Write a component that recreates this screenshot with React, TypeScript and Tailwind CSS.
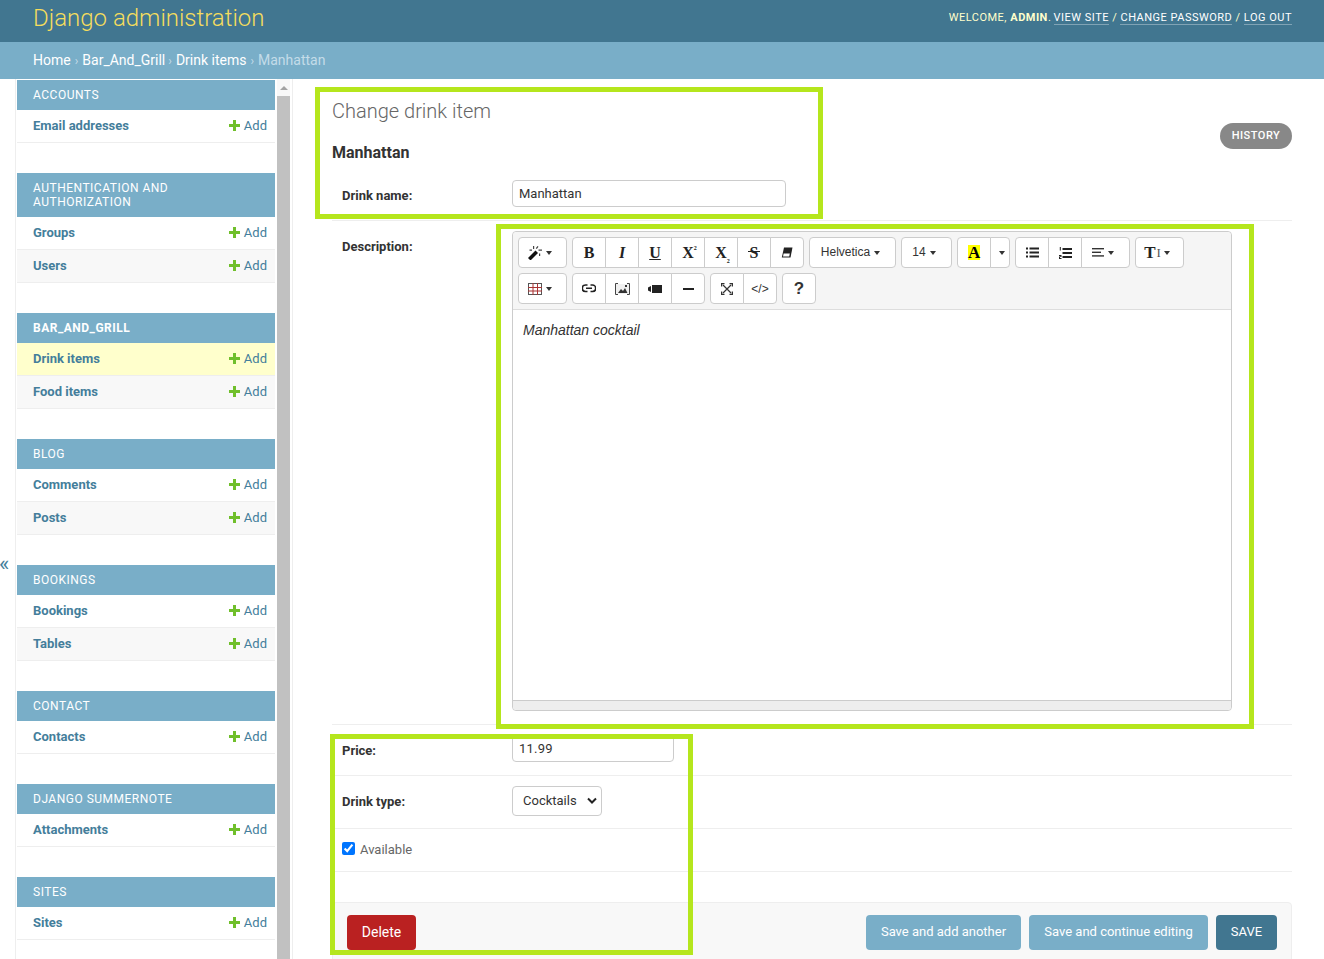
import React from "react";

const sections: { title: string; rows: { name: string; current?: boolean }[]; tall?: boolean }[] = [
  { title: "Accounts", rows: [{ name: "Email addresses" }] },
  { title: "Authentication and Authorization", tall: true, rows: [{ name: "Groups" }, { name: "Users" }] },
  { title: "Bar_And_Grill", rows: [{ name: "Drink items", current: true }, { name: "Food items" }] },
  { title: "Blog", rows: [{ name: "Comments" }, { name: "Posts" }] },
  { title: "Bookings", rows: [{ name: "Bookings" }, { name: "Tables" }] },
  { title: "Contact", rows: [{ name: "Contacts" }] },
  { title: "Django Summernote", rows: [{ name: "Attachments" }] },
  { title: "Sites", rows: [{ name: "Sites" }] },
];

function Caret() {
  return <span className="inline-block w-0 h-0 align-middle border-x-[3px] border-x-transparent border-t-[4px] border-t-[#333] ml-[4px]" />;
}

function Plus() {
  return (
    <svg width="11" height="11" viewBox="0 0 11 11" className="mr-[4px] -mt-px">
      <path d="M4 0h3v4h4v3H7v4H4V7H0V4h4z" fill="#70bf2b" />
    </svg>
  );
}

function TB({ w = 34, children, first, last }: { w?: number; children: React.ReactNode; first?: boolean; last?: boolean }) {
  return (
    <div
      style={{ width: w }}
      className={`h-[31px] bg-white border border-[#ccc] flex items-center justify-center text-[#333] -ml-px first:ml-0 ${first ? "rounded-l-[4px]" : ""} ${last ? "rounded-r-[4px]" : ""}`}
    >
      {children}
    </div>
  );
}

function Group({ items }: { items: { w?: number; c: React.ReactNode }[] }) {
  return (
    <div className="flex">
      {items.map((it, i) => (
        <TB key={i} w={it.w} first={i === 0} last={i === items.length - 1}>
          {it.c}
        </TB>
      ))}
    </div>
  );
}

const serif = "font-['Liberation_Serif',serif] font-bold text-[#222]";

function Wand() {
  return (
    <svg width="14" height="14" viewBox="0 0 14 14" fill="#111">
      <path d="M0 12L7.5 4.5l2.5 2.5L2.5 14.5z" />
      <path d="M5 0h1.2v3H5zM11 7.5h1.2v2.5H11zM10.5 3.5H14v1.2h-3.5zM1.5 3.5h2.5v1.2H1.5zM9.5 0l1 .7L8.8 3l-1-.7z" fill="#444" />
    </svg>
  );
}
function Eraser() {
  return (
    <svg width="12" height="11" viewBox="0 0 12 11" fill="#222">
      <path d="M3 .5h8.5L9.5 10.5H.8z" />
      <path d="M2.6 6.5h6.2l-.6 3H2z" fill="#fff" />
    </svg>
  );
}
function LinkIcon() {
  return (
    <svg width="14" height="9" viewBox="0 0 14 9" fill="none" stroke="#222" strokeWidth="1.6">
      <path d="M5.5 1H3.5a2.6 2.6 0 0 0 0 6.5h2M8.5 1h2a2.6 2.6 0 0 1 0 6.5h-2M4 4.3h6" />
    </svg>
  );
}
function PicIcon() {
  return (
    <svg width="15" height="12" viewBox="0 0 15 12">
      <path d="M3 .5H.5v11H3M12 .5h2.5v11H12" fill="none" stroke="#444" />
      <rect x="1" y="1" width="13" height="10" fill="#f0f0f0" />
      <path d="M3 10l3-4 2 2 2-3 2.5 5z" fill="#333" />
      <rect x="10" y="2" width="2" height="2" fill="#333" />
    </svg>
  );
}
function VideoIcon() {
  return (
    <svg width="14" height="8" viewBox="0 0 14 8" fill="#222">
      <path d="M0 2.5L3 1v6L0 5.5z" />
      <rect x="4" y="0" width="10" height="8" />
    </svg>
  );
}
function UlIcon() {
  return (
    <svg width="13" height="11" viewBox="0 0 13 11" fill="#222">
      <rect x="0" y="0.5" width="2" height="2" />
      <rect x="0" y="4.5" width="2" height="2" />
      <rect x="0" y="8.5" width="2" height="2" />
      <rect x="3.5" y="0.5" width="9.5" height="2" />
      <rect x="3.5" y="4.5" width="9.5" height="2" />
      <rect x="3.5" y="8.5" width="9.5" height="2" />
    </svg>
  );
}
function OlIcon() {
  return (
    <svg width="13" height="12" viewBox="0 0 13 12" fill="#222">
      <rect x="0.8" y="0" width="1" height="3.5" />
      <path d="M0 8h2.5v2H1v1h1.5v1H0v-2.5h1.5v-.6H0z" />
      <rect x="3.5" y="1" width="9.5" height="2" />
      <rect x="3.5" y="5" width="9.5" height="2" />
      <rect x="3.5" y="9" width="9.5" height="2" />
    </svg>
  );
}
function AlignIcon() {
  return (
    <svg width="12" height="9" viewBox="0 0 12 9" fill="#333">
      <rect x="0" y="0" width="12" height="1.4" />
      <rect x="0" y="3.6" width="9" height="1.4" />
      <rect x="0" y="7.2" width="12" height="1.4" />
    </svg>
  );
}

const arial = "font-['Liberation_Sans',sans-serif]";

function Toolbar() {
  return (
    <div className="bg-[#f5f5f5] border-b border-[#ddd] h-[78px] pl-[5px] pt-[5px] rounded-t-[4px] flex flex-col gap-[5px]">
      <div className="flex gap-[5px]">
        <Group items={[{ w: 49, c: <span className="flex items-center pr-[5px]"><Wand /><Caret /></span> }]} />
        <Group
          items={[
            { c: <span className={`${serif} text-[16px]`}>B</span> },
            { c: <span className={`${serif} italic text-[16px]`}>I</span> },
            { c: <span className={`${serif} text-[16px] underline`}>U</span> },
            { c: <span className={`${serif} text-[16px] flex pl-[3px]`}>X<span className="text-[6px] leading-[14px]">2</span></span> },
            { c: <span className={`${serif} text-[16px] flex items-end pl-[3px]`}>X<span className="text-[6px] leading-[8px]">2</span></span> },
            { c: <span className={`${serif} text-[16px] relative`}>S<span className="absolute left-[-2px] right-[-2px] top-[10px] h-[1px] bg-[#222]" /></span> },
            { c: <Eraser /> },
          ]}
        />
        <Group items={[{ w: 87, c: <span className={`text-[12px] pr-[4px] -mt-px ${arial}`}>Helvetica<Caret /></span> }]} />
        <Group items={[{ w: 51, c: <span className={`text-[12px] pr-[5px] -mt-px ${arial}`}>14<Caret /></span> }]} />
        <Group
          items={[
            { c: <span className={`${serif} text-[17px] bg-[#ffff00] w-[12px] h-[15px] leading-[15px] text-center text-black`}>A</span> },
            { w: 20, c: <Caret /> },
          ]}
        />
        <Group
          items={[
            { c: <UlIcon /> },
            { c: <OlIcon /> },
            { w: 49, c: <span className="flex items-center pr-[5px]"><AlignIcon /><Caret /></span> },
          ]}
        />
        <Group items={[{ w: 49, c: <span className={`${serif} text-[17px] flex items-center pr-[5px]`}>T<span className="font-normal text-[13px] text-[#555] ml-px">I</span><span className="-ml-px flex"><Caret /></span></span> }]} />
      </div>
      <div className="flex gap-[5px]">
        <Group
          items={[
            {
              w: 49,
              c: (
                <span className="flex items-center pr-[5px]">
                  <svg width="14" height="12" viewBox="0 0 14 12" fill="none" stroke="#555" strokeWidth="1">
                    <rect x="0.5" y="0.5" width="13" height="11" />
                    <path d="M0 4.5h14M0 8h14M5 0v12M9.5 0v12" stroke="#a33" />
                  </svg>
                  <Caret />
                </span>
              ),
            },
          ]}
        />
        <Group items={[{ c: <LinkIcon /> }, { c: <PicIcon /> }, { c: <VideoIcon /> }, { c: <span className="block w-[11px] h-[2px] bg-[#222]" /> }]} />
        <Group
          items={[
            {
              c: (
                <svg width="12" height="12" viewBox="0 0 12 12" fill="none" stroke="#333" strokeWidth="1.2">
                  <path d="M2 2l8 8M10 2l-8 8" />
                  <path d="M.5 3.5v-3h3M8.5.5h3v3M.5 8.5v3h3M8.5 11.5h3v-3" strokeWidth="1.5" />
                </svg>
              ),
            },
            { c: <span className={`text-[12px] ${arial}`}>&lt;/&gt;</span> },
          ]}
        />
        <Group items={[{ c: <span className={`text-[17px] font-bold ${arial}`}>?</span> }]} />
      </div>
    </div>
  );
}

function Sidebar() {
  return (
    <div className="flex w-[293px] shrink-0 border-r border-[#eee]">
      <div className="w-[16px] shrink-0 border-r border-[#eee] flex items-center text-[#447e9b] text-[22px] leading-none h-[880px] pt-[90px]">
        <span className="-ml-px">«</span>
      </div>
      <div className="w-[261px] shrink-0 pl-px pr-[2px] pt-px">
        {sections.map((s) => (
          <div key={s.title} className="mb-[30px]">
            <div
              className={`bg-[#79aec8] text-white text-[12px] tracking-[0.5px] uppercase px-4 flex items-center leading-[14px] ${s.tall ? "h-[44px]" : "h-[30px]"} ${s.title === "Bar_And_Grill" ? "font-bold" : ""}`}
            >
              <span>{s.title}</span>
            </div>
            {s.rows.map((r, i) => (
              <div
                key={r.name}
                className={`h-[33px] border-b border-[#eee] flex items-center justify-between pl-4 pr-2 text-[13px] ${r.current ? "bg-[#ffffcc]" : i % 2 ? "bg-[#f8f8f8]" : "bg-white"}`}
              >
                <span className="font-bold text-[#447e9b]">{r.name}</span>
                <span className="flex items-center text-[#447e9b]">
                  <Plus />
                  Add
                </span>
              </div>
            ))}
          </div>
        ))}
      </div>
      <div className="w-[13px] bg-[#f8f8f8] flex flex-col items-center">
        <div className="h-[17px] flex items-center justify-center">
          <span className="w-0 h-0 border-x-[4px] border-x-transparent border-b-[4px] border-b-[#a3a3a3]" />
        </div>
        <div className="w-full flex-1 bg-[#c1c1c1]" />
      </div>
    </div>
  );
}

function Row({ className, children }: { className: string; children: React.ReactNode }) {
  return <div className={`border-b border-[#eee] pl-[10px] flex ${className}`}>{children}</div>;
}

function Label({ children }: { children: React.ReactNode }) {
  return <div className="w-[170px] shrink-0 text-[13px] font-bold text-[#333] leading-[20px] pt-[6px]">{children}</div>;
}

function Btn({ children, className }: { children: React.ReactNode; className: string }) {
  return <div className={`h-[35px] rounded-[4px] flex items-center justify-center text-white ${className}`}>{children}</div>;
}

export default function App() {
  return (
    <div className="relative w-[1324px] h-[959px] overflow-hidden bg-white font-['Roboto',sans-serif] text-[#333]">
      <header className="h-[42px] bg-[#417690] flex justify-between pl-[33px] pr-[32px]">
        <div className="text-[24px] font-light text-[#f5dd5d] leading-[36px]">Django administration</div>
        <div className="text-[11px] tracking-[0.5px] uppercase text-[#ffc] pt-[10px] leading-[15px]">
          Welcome, <strong className="font-bold">admin</strong>.{" "}
          <span className="text-white border-b border-[#ffffff55] -ml-px">View site</span> /{" "}
          <span className="text-white border-b border-[#ffffff55]">Change password</span> /{" "}
          <span className="text-white border-b border-[#ffffff55]">Log out</span>
        </div>
      </header>
      <nav className="h-[37px] bg-[#79aec8] pl-[33px] flex items-center text-[14px] text-white">
        Home<span className="text-[#c4dce8] text-[12px] mx-[4px]">›</span>Bar_And_Grill
        <span className="text-[#c4dce8] text-[12px] ml-[3px] mr-[4px]">›</span>Drink items
        <span className="text-[#c4dce8] text-[12px] mx-[4px]">›</span>
        <span className="text-[#c4dce8]">Manhattan</span>
      </nav>
      <div className="flex h-[880px]">
        <Sidebar />
        <main className="w-[1031px] pl-[39px] pr-[32px]">
          <div className="flex justify-between h-[44px]">
            <h1 className="text-[20px] font-light text-[#666] leading-[24px] pt-[20px]">Change drink item</h1>
            <div className="mt-[44px] h-[26px] w-[72px] rounded-[15px] bg-[#888] text-white text-[11px] font-medium tracking-[0.5px] flex items-center justify-center">HISTORY</div>
          </div>
          <h2 className="text-[16px] font-bold text-[#333] mt-[20px] leading-[20px]">Manhattan</h2>
          <Row className="h-[51px] mt-[7px] pt-[10px] items-start">
            <Label>Drink name:</Label>
            <div className="w-[274px] h-[27px] border border-[#ccc] rounded-[4px] px-[6px] text-[13px] leading-[25px]">Manhattan</div>
          </Row>
          <Row className="h-[504px] pt-[10px] items-start">
            <Label>Description:</Label>
            <div className="w-[720px] h-[480px] border border-[#ccc] rounded-[4px] flex flex-col">
              <Toolbar />
              <div className={`flex-1 px-[10px] pt-[10px] italic text-[14px] text-[#333] leading-[21px] ${arial}`}>Manhattan cocktail</div>
              <div className="h-[10px] bg-[#eee] border-t border-[#ccc] rounded-b-[4px]" />
            </div>
          </Row>
          <Row className="h-[51px] pt-[10px] items-start">
            <Label>Price:</Label>
            <div className="w-[162px] h-[27px] border border-[#ccc] rounded-[4px] px-[6px] text-[13px] leading-[25px] tracking-[0.2px]">11.99</div>
          </Row>
          <Row className="h-[53px] pt-[10px] items-start">
            <Label>Drink type:</Label>
            <div className="w-[90px] h-[30px] border border-[#ccc] rounded-[4px] pl-[10px] pr-[4px] text-[13px] flex items-center justify-between">
              <span>Cocktails</span>
              <svg width="10" height="8" viewBox="0 0 10 8" fill="none" stroke="#222" strokeWidth="2">
                <path d="M1 1.5l4 4 4-4" />
              </svg>
            </div>
          </Row>
          <Row className="h-[43px] items-center">
            <input type="checkbox" defaultChecked className="w-[13px] h-[13px] m-0 mb-[3px] accent-[#0075ff]" />
            <span className="ml-[5px] text-[13px] text-[#666]">Available</span>
          </Row>
          <div className="mt-[30px] h-[80px] bg-[#f8f8f8] border border-[#eee] rounded-[4px] flex justify-between px-[14px] pt-[12px]">
            <Btn className="w-[69px] bg-[#ba2121] text-[14px]">Delete</Btn>
            <div className="flex gap-[8px]">
              <Btn className="w-[155px] bg-[#79aec8] text-[13px] pb-px">Save and add another</Btn>
              <Btn className="w-[179px] bg-[#79aec8] text-[13px] pb-px">Save and continue editing</Btn>
              <Btn className="w-[61px] bg-[#417690] text-[13px] pb-px">SAVE</Btn>
            </div>
          </div>
        </main>
      </div>
      <div className="absolute left-[315px] top-[87px] w-[508px] h-[132px] border-[5px] border-[#b5e61d]" />
      <div className="absolute left-[496px] top-[224px] w-[758px] h-[505px] border-[5px] border-[#b5e61d]" />
      <div className="absolute left-[330px] top-[734px] w-[363px] h-[221px] border-[5px] border-[#b5e61d]" />
    </div>
  );
}
